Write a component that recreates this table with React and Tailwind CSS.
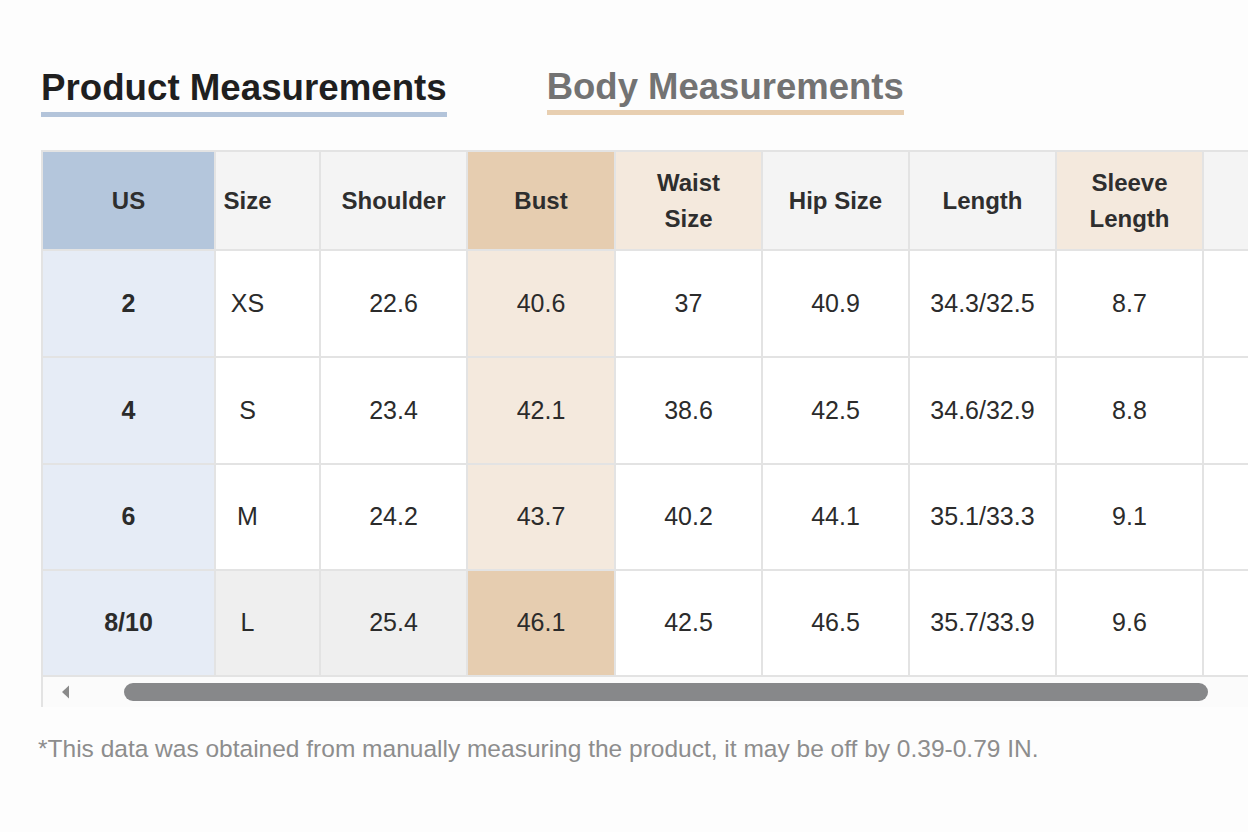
import React from 'react';

const columns = [
  { key: 'us', label: 'US', width: 173, head: 'bg-[#b4c6dc]', body: 'bg-[#e6ecf6]' },
  { key: 'size', label: 'Size', width: 105, head: 'bg-[#f4f4f4]', body: 'bg-white', offset: true },
  { key: 'shoulder', label: 'Shoulder', width: 147, head: 'bg-[#f4f4f4]', body: 'bg-white' },
  { key: 'bust', label: 'Bust', width: 148, head: 'bg-[#e6cdb0]', body: 'bg-[#f4e9dd]' },
  { key: 'waist', label: ['Waist', 'Size'], width: 147, head: 'bg-[#f4e9dd]', body: 'bg-white' },
  { key: 'hip', label: 'Hip Size', width: 147, head: 'bg-[#f4f4f4]', body: 'bg-white' },
  { key: 'length', label: 'Length', width: 147, head: 'bg-[#f4f4f4]', body: 'bg-white' },
  { key: 'sleeve', label: ['Sleeve', 'Length'], width: 147, head: 'bg-[#f4e9dd]', body: 'bg-white' },
  { key: 'extra', label: '', width: 147, head: 'bg-[#f4f4f4]', body: 'bg-white' },
];

const rows = [
  { us: '2', size: 'XS', shoulder: '22.6', bust: '40.6', waist: '37', hip: '40.9', length: '34.3/32.5', sleeve: '8.7', h: 'h-[107px]' },
  { us: '4', size: 'S', shoulder: '23.4', bust: '42.1', waist: '38.6', hip: '42.5', length: '34.6/32.9', sleeve: '8.8', h: 'h-[107px]' },
  { us: '6', size: 'M', shoulder: '24.2', bust: '43.7', waist: '40.2', hip: '44.1', length: '35.1/33.3', sleeve: '9.1', h: 'h-[106px]' },
  { us: '8/10', size: 'L', shoulder: '25.4', bust: '46.1', waist: '42.5', hip: '46.5', length: '35.7/33.9', sleeve: '9.6', h: 'h-[106px]', last: true },
];

const lastRowBg = {
  size: 'bg-[#efefef]',
  shoulder: 'bg-[#efefef]',
  bust: 'bg-[#e6cdb0]',
};

const App = () => {
  return (
    <div className="w-[1248px] h-[832px] bg-[#fdfdfd] overflow-hidden text-[#2b2b2b]" style={{ fontFamily: '"Liberation Sans", Arial, sans-serif' }}>
      <div className="flex items-start gap-[100px] pl-[41px] pt-[67px]">
        <div className="inline-block border-b-[5px] border-[#b3c4da] pb-[4px] text-[36.7px] leading-[41px] font-bold text-[#1f1f1f]">
          Product Measurements
        </div>
        <div className="inline-block border-b-[5px] border-[#e8cfb1] pb-[4px] text-[36.5px] leading-[39px] font-bold text-[#737373]">
          Body Measurements
        </div>
      </div>

      <div className="mt-[33px] ml-[41px] overflow-hidden">
        <table className="border-collapse table-fixed w-[1308px]">
          <colgroup>
            {columns.map((c) => (
              <col key={c.key} style={{ width: c.width }} />
            ))}
          </colgroup>
          <thead>
            <tr className="h-[99px]">
              {columns.map((c) => (
                <th
                  key={c.key}
                  className={`${c.head} border-2 border-[#e3e3e3] text-[24px] leading-[36px] font-bold text-center text-[#2e2e2e] ${c.offset ? 'pr-[40px]' : ''}`}
                >
                  {Array.isArray(c.label) ? (
                    <>
                      {c.label[0]}
                      <br />
                      {c.label[1]}
                    </>
                  ) : (
                    c.label
                  )}
                </th>
              ))}
            </tr>
          </thead>
          <tbody>
            {rows.map((r) => (
              <tr key={r.us} className={r.h}>
                {columns.map((c) => {
                  const bg = r.last && lastRowBg[c.key] ? lastRowBg[c.key] : c.body;
                  return (
                    <td
                      key={c.key}
                      className={`${bg} border-2 border-[#e3e3e3] text-center text-[25px] ${c.key === 'us' ? 'font-bold' : ''} ${c.offset ? 'pr-[40px]' : ''}`}
                    >
                      {r[c.key] || ''}
                    </td>
                  );
                })}
              </tr>
            ))}
          </tbody>
        </table>
        <div className="h-[30px] flex items-center border-l-2 border-[#e3e3e3] bg-[#fbfbfb]">
          <svg width="12" height="16" viewBox="0 0 12 16" className="ml-[16px]">
            <path d="M10 1.5 L3 8 L10 14.5 Z" fill="#8a8a8a" />
          </svg>
          <div className="ml-[53px] w-[1084px] h-[18px] rounded-full bg-[#87888a]" />
        </div>
      </div>

      <p className="mt-[27px] ml-[38px] text-[24.5px] leading-[30px] text-[#8d8d8d]">
        *This data was obtained from manually measuring the product, it may be off by 0.39-0.79 IN.
      </p>
    </div>
  );
};

export default App;
